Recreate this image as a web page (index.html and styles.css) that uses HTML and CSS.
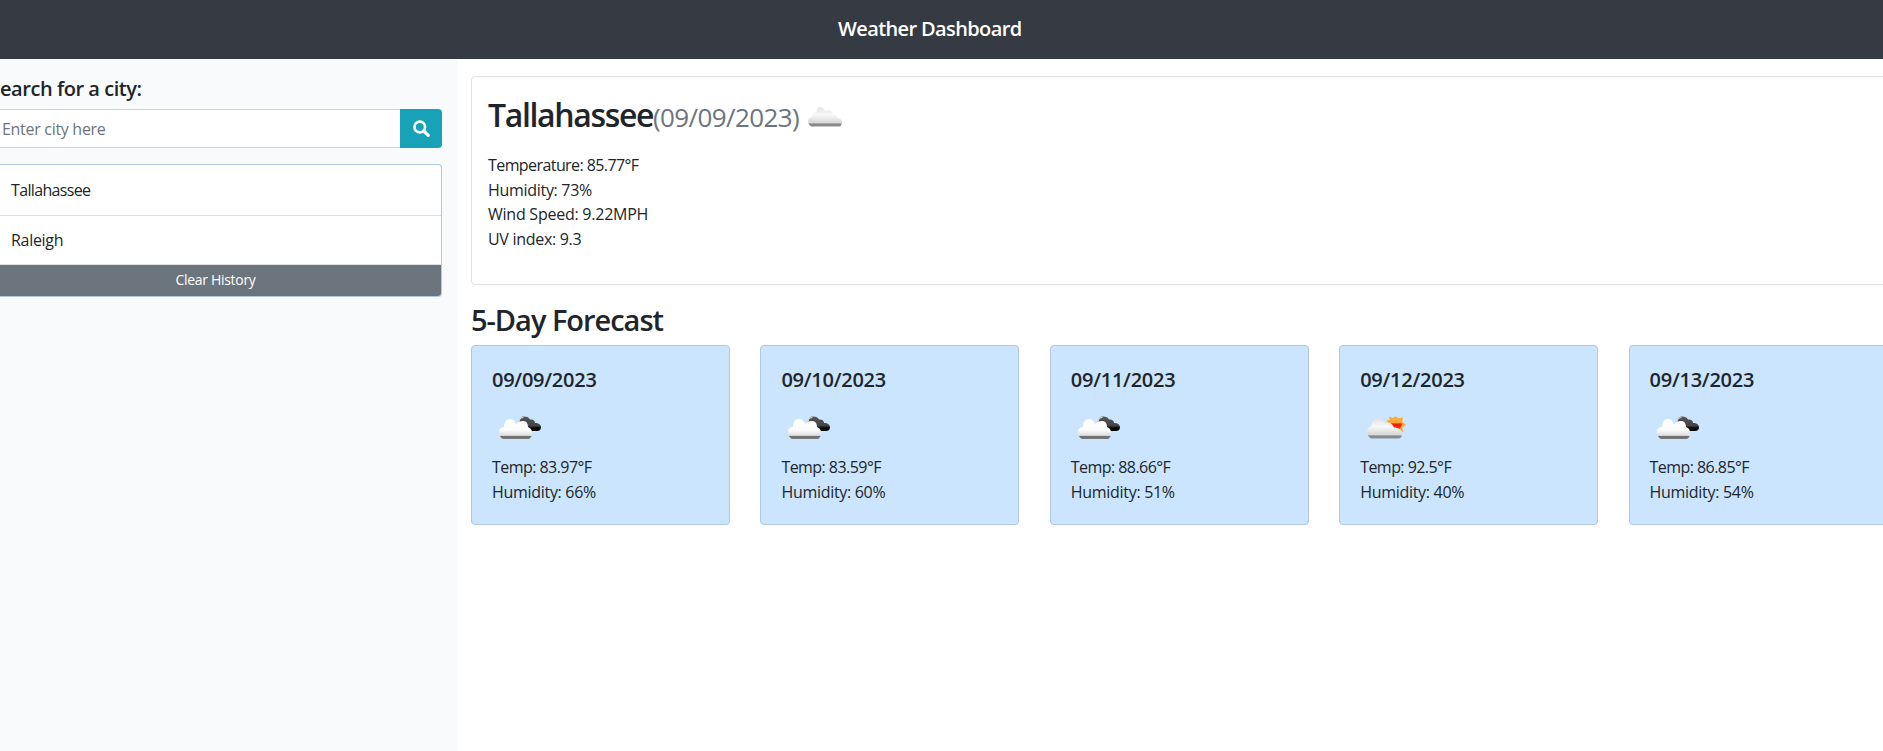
FILE: index.html
```html
<!DOCTYPE html>
<html lang="en">
<head>
<meta charset="utf-8">
<title>Weather Dashboard</title>
<link rel="stylesheet" href="styles.css">
</head>
<body>
<svg width="0" height="0" class="defs" aria-hidden="true">
  <defs>
    <linearGradient id="white" x1="0" y1="0" x2="0" y2="1">
      <stop offset="0" stop-color="#fff"/><stop offset=".55" stop-color="#fcfcfc"/><stop offset=".82" stop-color="#dedede"/><stop offset=".87" stop-color="#707070"/><stop offset="1" stop-color="#777"/>
    </linearGradient>
    <linearGradient id="grey" x1="0" y1="0" x2="0" y2="1">
      <stop offset="0" stop-color="#e2e2e2"/><stop offset=".4" stop-color="#f8f8f8"/><stop offset=".8" stop-color="#d8d8d8"/><stop offset=".88" stop-color="#858789"/><stop offset="1" stop-color="#8b8f93"/>
    </linearGradient>
    <linearGradient id="dark" x1="0" y1="0" x2="0" y2="1">
      <stop offset="0" stop-color="#555"/><stop offset=".65" stop-color="#444"/><stop offset=".75" stop-color="#111"/><stop offset="1" stop-color="#000"/>
    </linearGradient>
    <linearGradient id="sun" x1="0" y1="0" x2="0" y2="1">
      <stop offset="0" stop-color="#ffc34a"/><stop offset=".4" stop-color="#ff9a2e"/><stop offset=".5" stop-color="#f21800"/><stop offset="1" stop-color="#ff3b00"/>
    </linearGradient>
    <symbol id="broken" viewBox="0 0 42 23">
      <path d="M20 8C19 3 22 .5 25 .5c3 0 5 1 6 3 3-.5 5 1 5 3.500 4 0 6 2 6 4.500 0 2.500-2 3.500-4 3.500H27C25 11 23 9 20 8z" fill="url(#dark)"/>
      <path d="M20 8C19.500 3.500 21.500 1.300 24.500 1.300" fill="none" stroke="#d9d9d9" stroke-width="1.200"/>
      <path d="M4 23C1 21.500 0 19 0 16c0-3 2-5 5-5C5 6 7 3 11 3c3 0 5 2 6 5 2-2 4-3 7-3 3 0 5 2 5 6 3 1 4 3 4 5.500 0 3.500-1 5.500-3 6.500z" fill="url(#white)"/>
    </symbol>
    <symbol id="cloud" viewBox="0 0 35 20">
      <path d="M3 19.500C1 18 0 16 0 14c0-2 2-4 4-4 0-3 1-4 4-5 1-3 2-5 4-5s4 2 5 4c4-2 8 0 8 3 3 0 4 2 4 4 3 0 5 2 5 4s-1 3.500-2 4.500z" fill="url(#grey)"/>
    </symbol>
    <symbol id="suncloud" viewBox="0 0 39 22">
      <path d="M22 0l3.500 1.500L28.500 0l3 1.500L36 1l-1 4 4 3.500-4 2.500 1.500 5-3.500-2-4 3-4-3-4-2 0-4-1-4 3-1z" fill="#ffa42d"/>
      <circle cx="29" cy="7.500" r="5.800" fill="url(#sun)"/>
      <path d="M4 22C1 20 0 17.500 0 15c0-3 2-5 4-5 1-5 3-8 7-8 4 0 6 2 7 5 3-2 7-1 9 4 4 0 8 2 8 6 0 3-1 5-4 5z" fill="url(#grey)"/>
    </symbol>
  </defs>
</svg>
<header class="navbar"><h1 class="brand">Weather Dashboard</h1></header>
<main class="layout">
  <aside class="sidebar">
    <h2 class="label">earch for a city:</h2>
    <div class="search">
      <div class="field">Enter city here</div>
      <button class="go" aria-label="Search">
        <svg width="17" height="17" viewBox="0 0 17 17"><circle cx="6.800" cy="7" r="5.300" fill="none" stroke="#fff" stroke-width="2.700"/><path d="M10.800 11l4.400 4.400" stroke="#fff" stroke-width="3.200" stroke-linecap="round"/></svg>
      </button>
    </div>
    <div class="history">
      <div class="item">Tallahassee</div>
      <div class="item">Raleigh</div>
      <button class="clear">Clear History</button>
    </div>
  </aside>
  <section class="content">
    <article class="current">
      <h2 class="city"><span class="name">Tallahassee</span><span class="date">(09/09/2023)</span><svg class="now" width="35" height="20"><use href="#cloud"/></svg></h2>
      <p class="temperature">Temperature: 85.77°F</p>
      <p>Humidity: 73%</p>
      <p class="wind">Wind Speed: 9.22MPH</p>
      <p>UV index: 9.3</p>
    </article>
    <h2 class="title">5-Day Forecast</h2>
    <div class="forecast">
      <article class="day"><h3>09/09/2023</h3><svg width="42" height="23"><use href="#broken"/></svg><p class="temp">Temp: 83.97°F</p><p>Humidity: 66%</p></article>
      <article class="day"><h3>09/10/2023</h3><svg width="42" height="23"><use href="#broken"/></svg><p class="temp">Temp: 83.59°F</p><p>Humidity: 60%</p></article>
      <article class="day"><h3>09/11/2023</h3><svg width="42" height="23"><use href="#broken"/></svg><p class="temp">Temp: 88.66°F</p><p>Humidity: 51%</p></article>
      <article class="day"><h3>09/12/2023</h3><svg width="39" height="23"><use href="#suncloud"/></svg><p class="temp">Temp: 92.5°F</p><p>Humidity: 40%</p></article>
      <article class="day"><h3>09/13/2023</h3><svg width="42" height="23"><use href="#broken"/></svg><p class="temp">Temp: 86.85°F</p><p>Humidity: 54%</p></article>
    </div>
  </section>
</main>
</body>
</html>
```
FILE: styles.css
```css
* { box-sizing: border-box; }
body {
  margin: 0;
  height: 751px;
  overflow: hidden;
  display: flex;
  flex-direction: column;
  background: #fff;
  color: #212529;
  font: 16px/24.500px "Open Sans", "Noto Sans", sans-serif;
  letter-spacing: -0.3px;
}
h1, h2, h3, p { margin: 0; }
button { border: 0; padding: 0; font: inherit; letter-spacing: inherit; color: #fff; }
.defs { display: block; flex: none; height: 0; }
.navbar {
  flex: none;
  height: 59px;
  padding-left: 838px;
  background: #353a43;
  color: #fff;
}
.brand { font-size: 20px; line-height: 57px; font-weight: 600; letter-spacing: -0.620px; white-space: nowrap; }
.layout { flex: 1; display: flex; }
.sidebar { flex: none; width: 457px; padding: 15px 15px 0 0; background: #f8fafc; overflow: hidden; }
.label { font-size: 20px; line-height: 30px; font-weight: 600; letter-spacing: -0.450px; white-space: nowrap; }
.search { display: flex; height: 39px; margin-top: 5px; }
.field {
  flex: 1;
  padding-left: 2px;
  border: solid #ced4da;
  border-width: 1px 0;
  background: #fff;
  color: #6c757d;
  line-height: 39px;
}
.go { width: 42px; display: grid; place-items: center; background: #17a2b8; border-radius: 0 4px 4px 0; }
.history {
  height: 133px;
  margin-top: 16px;
  border: 1px solid #b0c8e2;
  border-left: 0;
  border-radius: 0 4px 4px 0;
  background: #fff;
  overflow: hidden;
}
.item { height: 49px; padding-left: 11px; line-height: 49px; border-bottom: 1px solid #dfdfdf; }
.item:first-child { height: 51px; line-height: 50px; letter-spacing: -0.650px; }
.clear { display: block; width: 100%; height: 31px; padding-right: 10px; background: #6c757d; font-size: 14px; }
.content { flex: none; width: 1448px; padding: 17px 0 0 14px; }
.current { height: 209px; padding: 16px; border: 1px solid #dee2e6; border-radius: 4px; }
.city { display: flex; align-items: baseline; height: 60px; line-height: 44px; white-space: nowrap; }
.name { width: 165px; font-size: 32px; font-weight: 600; letter-spacing: -1.350px; }
.date { width: 155px; font-size: 26px; font-weight: 400; color: #6c757d; letter-spacing: -0.600px; }
.temperature { letter-spacing: -0.580px; }
.wind { letter-spacing: -0.240px; }
.title { margin-top: 15px; height: 45px; font-size: 29px; line-height: 40px; font-weight: 600; letter-spacing: -1.020px; }
.forecast { display: grid; grid-template-columns: repeat(5, 259px); gap: 30.400px; }
.day { height: 180px; padding: 21px 20px; background: #cbe5fe; border: 1px solid #b0c8e2; border-radius: 4px; }
.day h3 { font-size: 20px; line-height: 26px; font-weight: 600; letter-spacing: -0.250px; }
.day svg { display: block; margin: 23px 0 16px 7px; }
.temp { letter-spacing: -0.550px; }
```
